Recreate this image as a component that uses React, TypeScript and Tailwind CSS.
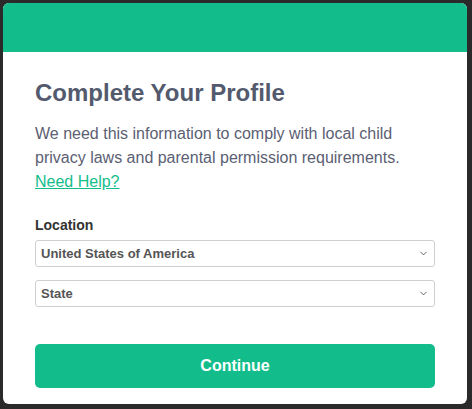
import { ChevronDown } from 'lucide-react';

function SelectBox({ label }: { label: string }) {
  return (
    <div className="flex h-[27px] items-center justify-between rounded-[3px] border border-[#cfcfcf] bg-white pl-[5px] pr-[5px]">
      <span className="text-[13px] font-bold text-[#555555]">{label}</span>
      <ChevronDown className="h-[11px] w-[11px] text-[#555555]" strokeWidth={2} />
    </div>
  );
}

export default function App() {
  return (
    <div className="h-[409px] w-[472px] bg-[#2a2a2a] p-[3px] pb-[5px] pr-[5px] font-['Liberation_Sans',Arial,sans-serif]">
      <div className="flex h-full flex-col overflow-hidden rounded-[6px] bg-white">
        {/* Header bar */}
        <div className="h-[49px] bg-[#13bd8b]" />

        {/* Body */}
        <div className="flex flex-1 flex-col px-[32px] pt-[26px]">
          <h1 className="text-[24px] font-bold leading-[30px] text-[#545a6e]">
            Complete Your Profile
          </h1>
          <p className="mt-[14px] text-[16px] leading-[24px] text-[#5b6072]">
            We need this information to comply with local child privacy laws and parental permission requirements.{' '}
            <a href="#" className="text-[#13bd8b] underline">
              Need Help?
            </a>
          </p>

          <div className="mt-[21px] text-[14px] font-bold text-[#333333]">Location</div>
          <div className="mt-[4px] flex flex-col gap-[13px]">
            <SelectBox label="United States of America" />
            <SelectBox label="State" />
          </div>

          <button className="mt-[37px] h-[44px] w-full rounded-[5px] bg-[#13bd8b] text-[16px] font-bold text-white">
            Continue
          </button>
        </div>
      </div>
    </div>
  );
}
